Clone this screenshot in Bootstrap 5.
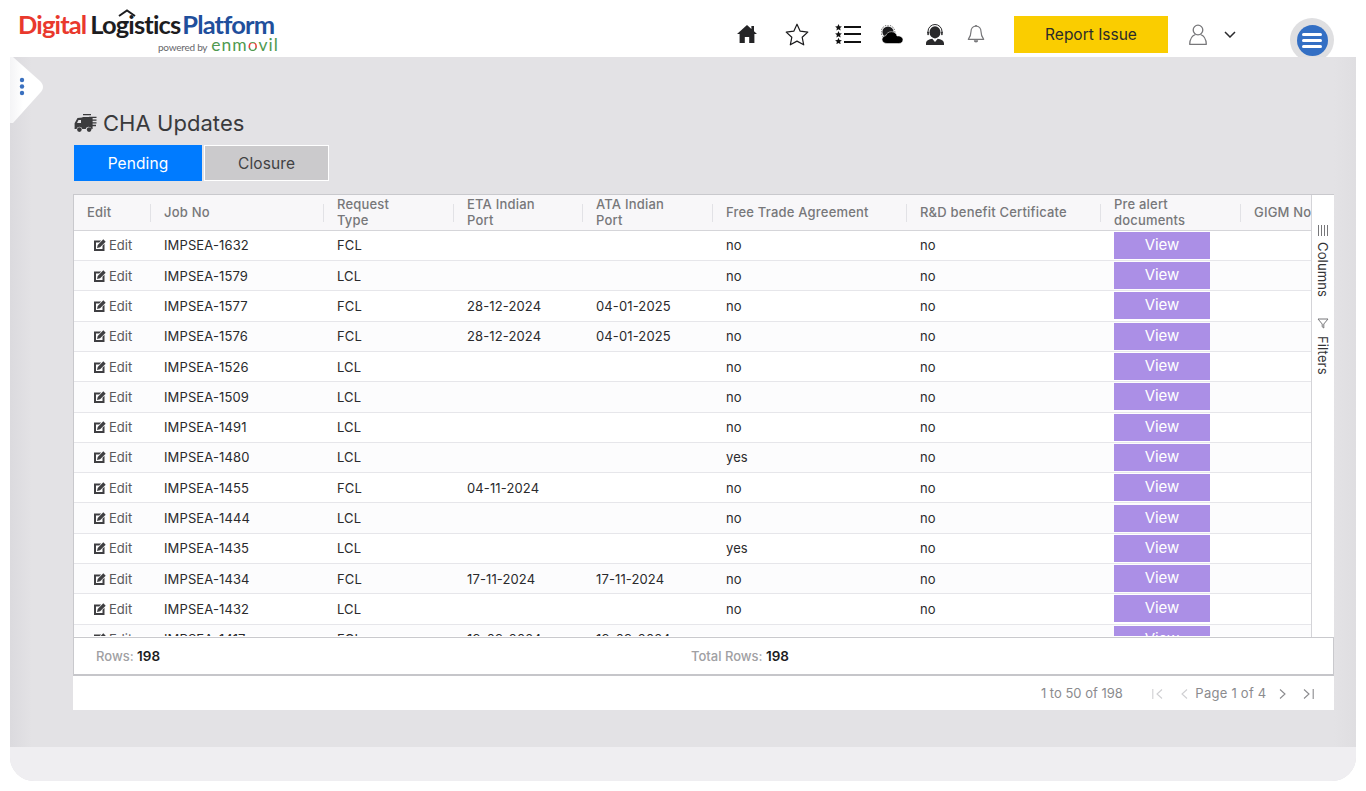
<!DOCTYPE html>
<html lang="en">
<head>
<meta charset="utf-8">
<title>CHA Updates</title>
<link href="https://cdn.jsdelivr.net/npm/bootstrap@5.3.0/dist/css/bootstrap.min.css" rel="stylesheet">
<style>
html,body{height:791px;overflow:hidden;background:#fff}
body{font-family:Inter,"Liberation Sans",sans-serif;font-size:13px;color:#2a2a2c}
.app-frame{margin:0 10px;height:781px;border-radius:0 0 24px 24px;overflow:hidden;background:#e3e2e5;position:relative}
.top-bar{height:57px;background:#fff;padding:0 20px 0 8px;flex:none}
.brand-box{width:270px;height:57px;position:relative;font-family:Lato,"Liberation Sans",sans-serif;text-decoration:none;display:block}
.brand-main{position:absolute;left:0;top:11px;font-size:25.5px;font-weight:700;letter-spacing:-.86px;white-space:nowrap;line-height:27px}
.b-red{color:#e9392d}.b-blk{color:#1d1d1f;margin-left:4px}.b-blu{color:#1f4f9c;margin-left:2px}
.brand-roof{position:absolute;left:100px;top:9px}
.brand-sub{position:absolute;left:140px;top:37px;white-space:nowrap;line-height:16px;color:#66666a;font-size:10px;letter-spacing:-.25px}
.brand-sub b{font-weight:400;font-size:17.5px;color:#4f9a50;letter-spacing:1px;margin-left:2px}
.brand-sub i{font-style:normal;background:linear-gradient(#4f9a50 42%,#e2453a 42% 66%,#4f9a50 66%);-webkit-background-clip:text;background-clip:text;color:transparent}
.top-nav{height:68px}
.ic-home{margin-right:28px}.ic-star{margin-right:26px}.ic-list{margin-right:20px}.ic-cloud{margin-right:22px}.ic-agent{margin-right:22px}.ic-bell{margin-right:29px}
.report-btn{width:154px;height:37px;background:#facd00;border:0;border-radius:0;color:#2b2b2b;font-size:15.5px;padding:1px 0 0;font-family:Inter,sans-serif;letter-spacing:0;margin-right:21px}
.report-btn:hover{background:#facd00;color:#2b2b2b}
.ic-user{margin-right:17px}.ic-chev{margin-right:54px}
.menu-ring{width:44px;height:44px;border-radius:50%;background:#dfdfe1;margin-top:12px;margin-right:2px;border:0;padding:0}
.menu-disc{width:31px;height:31px;border-radius:50%;background:#336fc4;gap:3px}
.menu-disc span{width:20px;height:3px;background:#fff;border-radius:2px}
.side-flag{position:absolute;left:0;top:57px;z-index:3}
.work-area{flex:1 1 auto;min-height:0;padding:53px 22px 0 63px;background:linear-gradient(90deg,#dbdade 0,#e3e2e5 22px,#e3e2e5 calc(100% - 22px),#dfdee1 100%)}
.page-ttl{height:26px;color:#3a3a3c;font-size:22px;font-weight:400;margin:0 0 9px;letter-spacing:.05px;gap:6px;line-height:26px;padding-left:1px}
.tab-strip{height:36px;gap:2px;margin-bottom:13px;padding-left:1px}
.tab-btn{height:36px;border:1px solid #fff;border-radius:0;font-size:15.5px;padding:1px 0 0;letter-spacing:.1px;color:#414143;background:#cbcacc}
.tab-btn:hover{background:#cbcacc;color:#414143}
.tab-on,.tab-on:hover{background:#007bff;border-color:#007bff;color:#fff;width:128px}
.tab-off{width:125px}
.grid-shell{width:1261px;background:#fff;border:1px solid #c9c9cd;border-bottom:0;height:443px}
.grid-clip{width:1237px;height:441px;overflow:hidden;flex:none}
.data-grid{table-layout:fixed;width:1400px;border-collapse:separate;border-spacing:0;margin:0}
.data-grid th{height:35.75px;background:#f8f7f9;color:#77777a;font-weight:500;font-size:13px;line-height:16.5px;letter-spacing:.2px;padding:0 13px;border-bottom:1px solid #d5d5d9;position:relative;vertical-align:middle;white-space:normal}
.data-grid th+th::before{content:"";position:absolute;left:-1px;top:9px;height:18px;width:1px;background:#e2e2e6}
.data-grid td{height:30.3px;padding:0 13px;border-bottom:1px solid #e6e6ea;color:#2a2a2c;font-size:13px;line-height:16px;background:#fff;vertical-align:middle;white-space:nowrap;letter-spacing:.12px}
.data-grid tr:nth-child(even) td{background:#fcfcfd}
.data-grid td.edit-cell{padding-left:19px;color:#58585b;letter-spacing:0}
.edit-cell svg{vertical-align:-2px;margin-right:3px}
.data-grid td.view-cell{padding:0 0 0 13px}
.view-btn{display:block;width:96px;height:27px;background:#ab8fe6;border:0;border-radius:0;color:#fff;font-size:15px;line-height:24px;padding:0 0 1px}
.view-btn:hover{background:#ab8fe6;color:#fff}
.side-rail{width:23px;border-left:1px solid #d4d4d8;padding-top:30px;flex:none;background:#fff}
.rail-txt{writing-mode:vertical-rl;font-size:13px;color:#333336;line-height:20px;letter-spacing:.15px}
.rail-a{margin-top:6px;margin-bottom:21px}
.rail-b{margin-top:7px}
.stat-bar{width:1261px;height:39px;background:#fff;border:1px solid #c9c9cd;border-bottom:2px solid #c6c6ca;padding-left:22px;font-size:13px;font-weight:500;color:#a0a0a3}
.stat-bar b{color:#1c1c1e;font-weight:600;font-size:13.5px}
.stat-a{width:595px}
.pager-bar{width:1261px;height:34px;background:#fff;padding:1px 20px 0 0;color:#8b8b8e;font-size:13px}
.pg-range{margin-right:29px}
.pg-pages{letter-spacing:.25px}
.pg-ic-a{margin-right:18px}.pg-ic-b{margin-right:7.5px}.pg-ic-c{margin:0 14px 0 12.5px}.pg-ic-l{margin-left:3px}
.frame-foot{height:34px;flex:none;background:#efeef1}
.sym-store{display:none}
</style>
</head>
<body>
<svg class="sym-store" aria-hidden="true"><symbol id="pen" viewBox="0 0 13 13"><path fill="#3f3f42" d="M1 1.500h7.200L6.200 3.500H3v6.500h6.500V6.800l2-2v7.200H1zM10.300.3l2.400 2.400L7.100 8.300l-3.100.7.700-3.100z"/></symbol></svg>
<div class="app-frame d-flex flex-column">
  <header class="top-bar d-flex align-items-start">
    <a class="brand-box" href="#">
      <span class="brand-main"><span class="b-red">Digital</span><span class="b-blk">Logistics</span><span class="b-blu">Platform</span></span>
      <svg class="brand-roof" width="18" height="8" viewBox="0 0 18 8"><path d="M1 7 9 1.500 17 7" fill="none" stroke="#1d1d1f" stroke-width="2"/></svg>
      <span class="brand-sub">powered by <b>enm<i>o</i>vil</b></span>
    </a>
    <nav class="top-nav d-flex align-items-center ms-auto">
      <svg class="ic-home" width="20" height="18" viewBox="0 0 20 18" aria-label="Home"><path fill="#242426" d="M10 0 0 9h2.600v9h5.200v-6h4.400v6h5.200V9H20l-3-2.700V1h-2.600v3z"/></svg>
      <svg class="ic-star" width="24" height="23" viewBox="0 0 24 23" aria-label="Favourites"><path fill="#fff" stroke="#1a1a1c" stroke-width="1.200" stroke-linejoin="round" d="M12 1.200l3.200 7 7.600.9-5.600 5.200 1.500 7.500L12 18.100l-6.700 3.700 1.500-7.500L1.200 9.100l7.600-.9z"/></svg>
      <svg class="ic-list" width="26" height="20" viewBox="0 0 26 20" aria-label="Tasks"><g fill="#111"><path d="M3.500 0l1 2.200 2.400.3-1.800 1.600.5 2.400-2.100-1.200-2.100 1.200.5-2.400L.1 2.500l2.400-.3z"/><path d="M3.500 7l1 2.200 2.400.3-1.800 1.600.5 2.400-2.100-1.200-2.100 1.200.5-2.400L.1 9.500l2.400-.3z"/><path d="M3.500 13.700l1 2.200 2.400.3-1.800 1.600.5 2.400-2.100-1.200-2.100 1.200.5-2.400L.1 16.200l2.400-.3z"/><rect x="9" y="2" width="17" height="2"/><rect x="9" y="9" width="17" height="2"/><rect x="9" y="17" width="17" height="2"/></g></svg>
      <svg class="ic-cloud" width="22" height="19" viewBox="0 0 22 19" aria-label="Weather"><circle cx="7" cy="7" r="6.800" fill="none" stroke="#555" stroke-width="1" stroke-dasharray="1.400 1.200"/><circle cx="7" cy="7" r="5.600" fill="#1c1c1e"/><path fill="#000" stroke="#eee" stroke-width=".6" d="M6 18.500c-3 0-5-1.700-5-4 0-2 1.600-3.600 3.700-3.800C5.500 8.300 7.700 6.700 10.400 6.700c3 0 5.300 1.900 5.600 4.300 3-.5 6 1.200 6 3.800 0 2.200-1.800 3.700-4.200 3.700z"/></svg>
      <svg class="ic-agent" width="20" height="21" viewBox="0 0 20 21" aria-label="Support"><path fill="none" stroke="#2a2a2c" stroke-width="1" d="M3 9V7.500a7 7 0 0 1 14 0V9"/><rect x="2.300" y="7.500" width="1.600" height="3.800" rx=".8" fill="#2a2a2c"/><rect x="16.100" y="7.500" width="1.600" height="3.800" rx=".8" fill="#2a2a2c"/><ellipse cx="10" cy="8.300" rx="5.500" ry="6.100" fill="#2a2a2c"/><path fill="#2a2a2c" d="M1 21v-1.500c0-2.800 3-4.200 6.300-4.700L10 18l2.700-3.200c3.300.5 6.300 1.900 6.300 4.700V21z"/></svg>
      <svg class="ic-bell" width="18" height="20" viewBox="0 0 18 20" aria-label="Notifications"><path fill="none" stroke="#77777a" stroke-width="1.200" stroke-linejoin="round" d="M9 2.200c-3 0-5 2.300-5 5.300 0 4.300-1.200 5.900-2.700 7.800h15.400C15.200 13.400 14 11.800 14 7.500c0-3-2-5.300-5-5.300z"/><path fill="#77777a" d="M7.800 2.300a1.200 1.200 0 0 1 2.400 0zM6.800 16.200h4.400a2.200 2.400 0 0 1-4.400 0z"/></svg>
      <button type="button" class="btn report-btn">Report Issue</button>
      <svg class="ic-user" width="18" height="21" viewBox="0 0 18 21" aria-label="Account"><circle cx="9" cy="6" r="4.800" fill="none" stroke="#77777a" stroke-width="1.300"/><path fill="none" stroke="#77777a" stroke-width="1.300" stroke-linejoin="round" d="M6.500 10.500c-3.300 1-5.500 3.700-5.800 9.800h16.600c-.3-6.100-2.500-8.800-5.800-9.800"/></svg>
      <svg class="ic-chev" width="12" height="7" viewBox="0 0 12 7" aria-label="Open"><path d="M1 1l5 5 5-5" fill="none" stroke="#2a2a2c" stroke-width="1.500"/></svg>
      <button type="button" class="menu-ring d-flex align-items-center justify-content-center" aria-label="Menu">
        <span class="menu-disc d-flex flex-column align-items-center justify-content-center"><span></span><span></span><span></span></span>
      </button>
    </nav>
  </header>

  <svg class="side-flag" width="34" height="68" viewBox="0 0 34 68" aria-hidden="true"><defs><linearGradient id="flagFill" x1="0" x2="1" y1="0" y2="0"><stop offset="0" stop-color="#f4f4f6"/><stop offset=".4" stop-color="#fff"/></linearGradient></defs><path fill="url(#flagFill)" d="M0 0h3l27 24c4 4 4 8 0 12L3 66H0z"/><g fill="#3a70bf"><circle cx="12" cy="23" r="2.200"/><circle cx="12" cy="29.500" r="2.200"/><circle cx="12" cy="36" r="2.200"/></g></svg>

  <main class="work-area">
    <h1 class="page-ttl d-flex align-items-center">
      <svg width="23" height="19" viewBox="0 0 23 19" aria-hidden="true"><path fill="#3b3b3d" d="M8.500 3.500 3.500 4 .6 9.200V15h1.900a3 3 0 0 1 5.800 0h3.400a3 3 0 0 1 5.800 0h1.100V3H8.500zM3 9l1.500-3H7v3z"/><circle cx="5.400" cy="15.600" r="2.300" fill="#3b3b3d"/><circle cx="15.100" cy="15.600" r="2.300" fill="#3b3b3d"/><path stroke="#3b3b3d" stroke-width="1.300" d="M9 .7h8M15 3.400h7.500M17 6.100h5.500M16 8.800h6.500M17 11.500h5"/></svg>
      <span>CHA Updates</span>
    </h1>
    <div class="tab-strip d-flex">
      <button type="button" class="btn tab-btn tab-on">Pending</button>
      <button type="button" class="btn tab-btn tab-off">Closure</button>
    </div>
    <section class="grid-shell d-flex">
      <div class="grid-clip">
        <table class="data-grid">
          <colgroup><col style="width:77px"><col style="width:173px"><col style="width:130px"><col style="width:129px"><col style="width:130px"><col style="width:194px"><col style="width:194px"><col style="width:140px"><col style="width:233px"></colgroup>
          <thead><tr><th>Edit</th><th>Job No</th><th>Request<br>Type</th><th>ETA Indian<br>Port</th><th>ATA Indian<br>Port</th><th>Free Trade Agreement</th><th>R&amp;D benefit Certificate</th><th>Pre alert<br>documents</th><th>GIGM No</th></tr></thead>
          <tbody>
            <tr><td class="edit-cell"><svg width="13" height="13"><use href="#pen"/></svg>Edit</td><td>IMPSEA-1632</td><td>FCL</td><td></td><td></td><td>no</td><td>no</td><td class="view-cell"><button type="button" class="btn view-btn">View</button></td><td></td></tr>
            <tr><td class="edit-cell"><svg width="13" height="13"><use href="#pen"/></svg>Edit</td><td>IMPSEA-1579</td><td>LCL</td><td></td><td></td><td>no</td><td>no</td><td class="view-cell"><button type="button" class="btn view-btn">View</button></td><td></td></tr>
            <tr><td class="edit-cell"><svg width="13" height="13"><use href="#pen"/></svg>Edit</td><td>IMPSEA-1577</td><td>FCL</td><td>28-12-2024</td><td>04-01-2025</td><td>no</td><td>no</td><td class="view-cell"><button type="button" class="btn view-btn">View</button></td><td></td></tr>
            <tr><td class="edit-cell"><svg width="13" height="13"><use href="#pen"/></svg>Edit</td><td>IMPSEA-1576</td><td>FCL</td><td>28-12-2024</td><td>04-01-2025</td><td>no</td><td>no</td><td class="view-cell"><button type="button" class="btn view-btn">View</button></td><td></td></tr>
            <tr><td class="edit-cell"><svg width="13" height="13"><use href="#pen"/></svg>Edit</td><td>IMPSEA-1526</td><td>LCL</td><td></td><td></td><td>no</td><td>no</td><td class="view-cell"><button type="button" class="btn view-btn">View</button></td><td></td></tr>
            <tr><td class="edit-cell"><svg width="13" height="13"><use href="#pen"/></svg>Edit</td><td>IMPSEA-1509</td><td>LCL</td><td></td><td></td><td>no</td><td>no</td><td class="view-cell"><button type="button" class="btn view-btn">View</button></td><td></td></tr>
            <tr><td class="edit-cell"><svg width="13" height="13"><use href="#pen"/></svg>Edit</td><td>IMPSEA-1491</td><td>LCL</td><td></td><td></td><td>no</td><td>no</td><td class="view-cell"><button type="button" class="btn view-btn">View</button></td><td></td></tr>
            <tr><td class="edit-cell"><svg width="13" height="13"><use href="#pen"/></svg>Edit</td><td>IMPSEA-1480</td><td>LCL</td><td></td><td></td><td>yes</td><td>no</td><td class="view-cell"><button type="button" class="btn view-btn">View</button></td><td></td></tr>
            <tr><td class="edit-cell"><svg width="13" height="13"><use href="#pen"/></svg>Edit</td><td>IMPSEA-1455</td><td>FCL</td><td>04-11-2024</td><td></td><td>no</td><td>no</td><td class="view-cell"><button type="button" class="btn view-btn">View</button></td><td></td></tr>
            <tr><td class="edit-cell"><svg width="13" height="13"><use href="#pen"/></svg>Edit</td><td>IMPSEA-1444</td><td>LCL</td><td></td><td></td><td>no</td><td>no</td><td class="view-cell"><button type="button" class="btn view-btn">View</button></td><td></td></tr>
            <tr><td class="edit-cell"><svg width="13" height="13"><use href="#pen"/></svg>Edit</td><td>IMPSEA-1435</td><td>LCL</td><td></td><td></td><td>yes</td><td>no</td><td class="view-cell"><button type="button" class="btn view-btn">View</button></td><td></td></tr>
            <tr><td class="edit-cell"><svg width="13" height="13"><use href="#pen"/></svg>Edit</td><td>IMPSEA-1434</td><td>FCL</td><td>17-11-2024</td><td>17-11-2024</td><td>no</td><td>no</td><td class="view-cell"><button type="button" class="btn view-btn">View</button></td><td></td></tr>
            <tr><td class="edit-cell"><svg width="13" height="13"><use href="#pen"/></svg>Edit</td><td>IMPSEA-1432</td><td>LCL</td><td></td><td></td><td>no</td><td>no</td><td class="view-cell"><button type="button" class="btn view-btn">View</button></td><td></td></tr>
            <tr><td class="edit-cell"><svg width="13" height="13"><use href="#pen"/></svg>Edit</td><td>IMPSEA-1417</td><td>FCL</td><td>19-09-2024</td><td>19-09-2024</td><td>no</td><td>no</td><td class="view-cell"><button type="button" class="btn view-btn">View</button></td><td></td></tr>
          </tbody>
        </table>
      </div>
      <aside class="side-rail d-flex flex-column align-items-center">
        <svg width="12" height="11" viewBox="0 0 12 11" aria-hidden="true"><path stroke="#77777a" d="M1.500 0v11M4.500 0v11M7.500 0v11M10.500 0v11"/></svg>
        <span class="rail-txt rail-a">Columns</span>
        <svg width="12" height="11" viewBox="0 0 12 11" aria-hidden="true"><path fill="none" stroke="#77777a" d="M1 1h10L6.800 6v4l-1.600-1.200V6z"/></svg>
        <span class="rail-txt rail-b">Filters</span>
      </aside>
    </section>
    <div class="stat-bar d-flex align-items-center">
      <span class="stat-a">Rows: <b>198</b></span>
      <span>Total Rows: <b>198</b></span>
    </div>
    <div class="pager-bar d-flex align-items-center justify-content-end">
      <span class="pg-range">1 to 50 of 198</span>
      <svg class="pg-ic-a" width="11" height="10" viewBox="0 0 11 10" aria-hidden="true"><path fill="none" stroke="#cfcfd2" stroke-width="1.100" d="M.8 0v10M10 .5 5 5l5 4.500"/></svg>
      <svg class="pg-ic-b" width="7" height="10" viewBox="0 0 7 10" aria-hidden="true"><path fill="none" stroke="#cfcfd2" stroke-width="1.100" d="M6 .5 1 5l5 4.500"/></svg>
      <span class="pg-pages">Page 1 of 4</span>
      <svg class="pg-ic-c" width="7" height="10" viewBox="0 0 7 10" aria-hidden="true"><path fill="none" stroke="#8b8b8e" stroke-width="1.100" d="M1 .5 6 5 1 9.500"/></svg>
      <svg class="pg-ic-l" width="11" height="10" viewBox="0 0 11 10" aria-hidden="true"><path fill="none" stroke="#8b8b8e" stroke-width="1.100" d="M1 .5 6 5 1 9.500M10.200 0v10"/></svg>
    </div>
  </main>
  <footer class="frame-foot"></footer>
</div>
<script src="https://cdn.jsdelivr.net/npm/bootstrap@5.3.0/dist/js/bootstrap.bundle.min.js"></script>
</body>
</html>
